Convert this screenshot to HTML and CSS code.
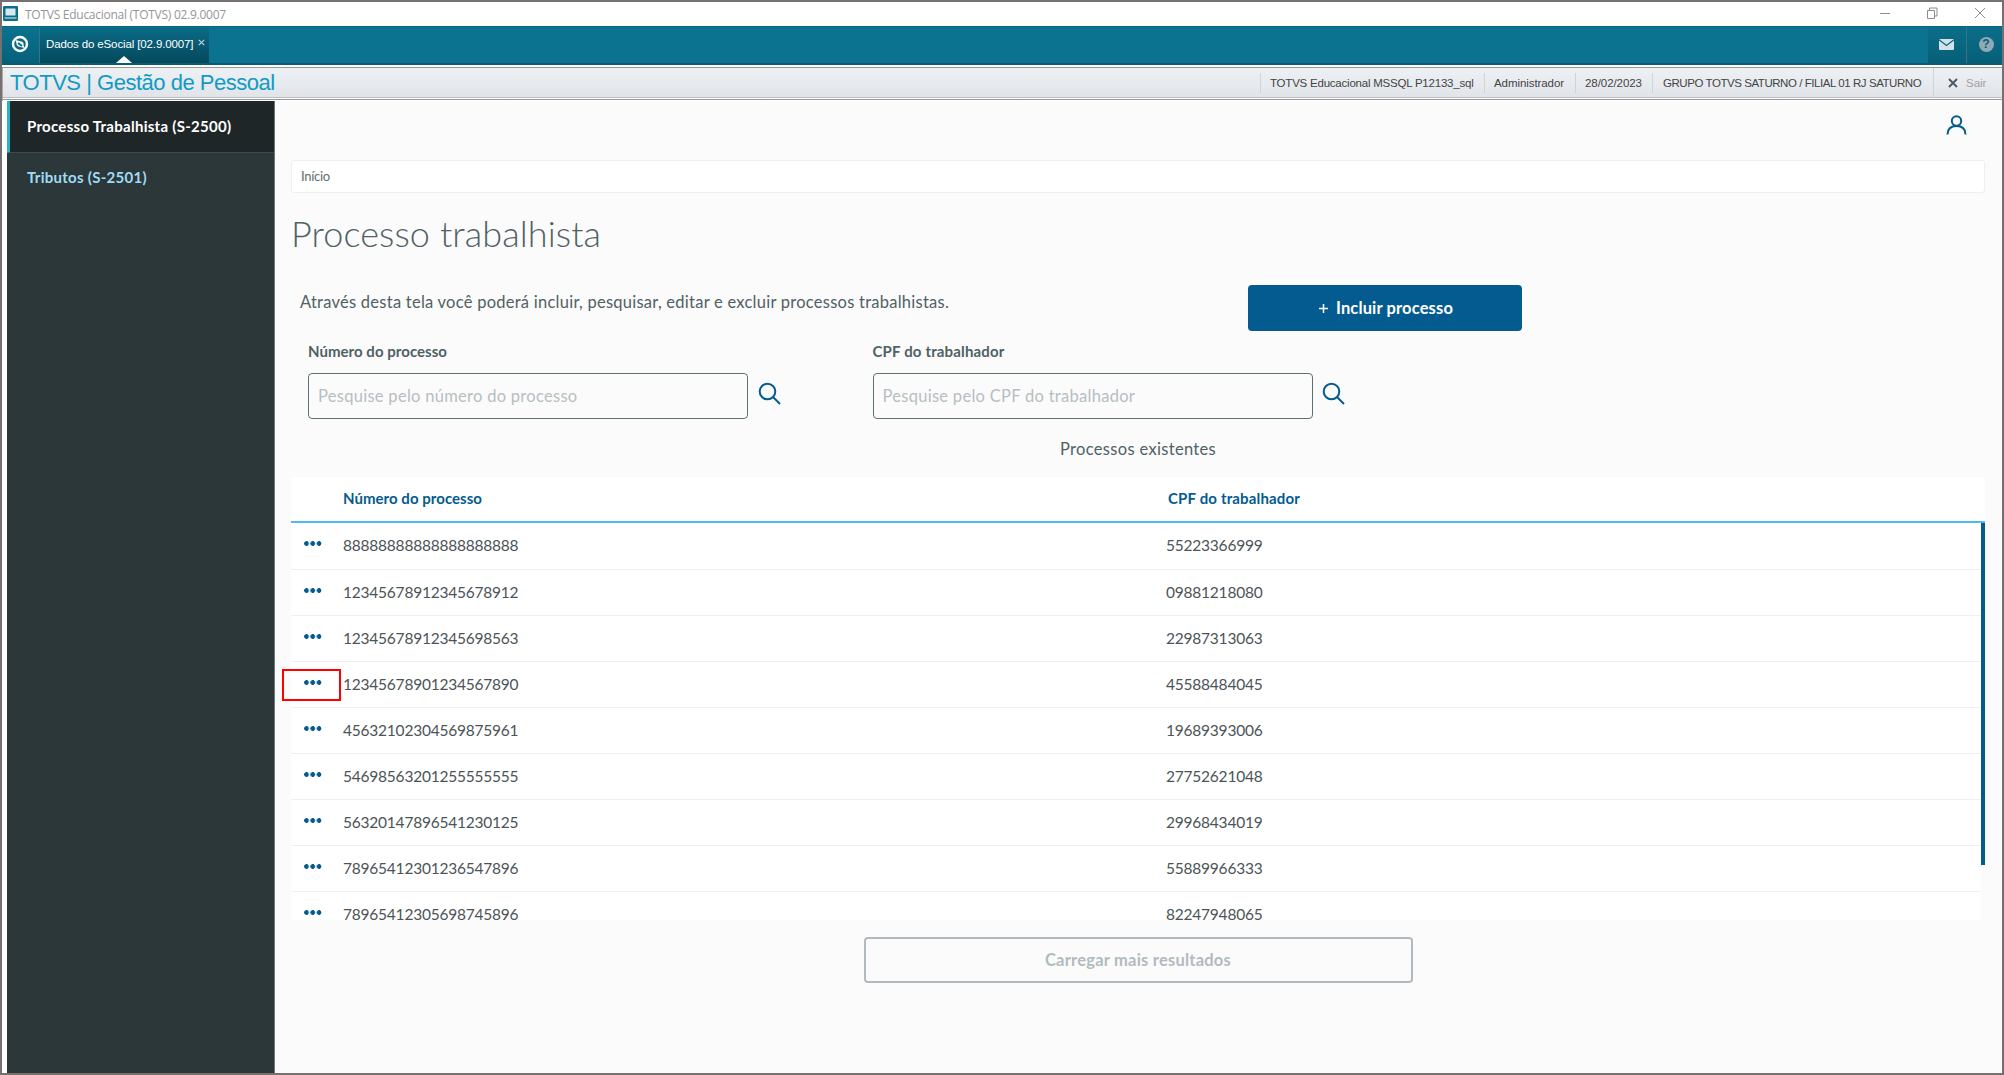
FILE: index.html
```html
<!DOCTYPE html>
<html lang="pt-BR">
<head>
<meta charset="utf-8">
<title>TOTVS Educacional (TOTVS) 02.9.0007</title>
<link rel="stylesheet" href="styles.css">
</head>
<body>
<div class="window">
  <header class="titlebar">
    <svg class="app-icon" width="15" height="15" viewBox="0 0 15 15"><rect width="15" height="15" rx="1" fill="#0b6f8b"/><rect x="2.5" y="2.5" width="10" height="7" fill="#d9e8ee"/><path d="M1.5 12h12" stroke="#9cc6d3" stroke-width="1.5"/></svg>
    <span class="app-name">TOTVS Educacional (TOTVS) 02.9.0007</span>
    <svg class="window-controls" width="108" height="14" viewBox="0 0 108 14" fill="none" stroke="#8d8d8d"><path d="M2 7.5h10M49.5 4.5h7v8h-7zM51.500 4.500v-2.500h7.500v8h-2M97 2l10 10M107 2l-10 10"/></svg>
  </header>
  <nav class="tabs">
    <div class="home"><svg width="18" height="18" viewBox="0 0 18 18" fill="none" stroke="#fff"><circle cx="9" cy="9" r="7" stroke-width="2.400"/><path d="M4.500 5l6 1.500q2.500.8 2 3.500l1 3-6-1.500q-2.500-.8-2-3z" fill="#fff" stroke="none"/><path d="M7 8l4 3" stroke="#0a6680" stroke-width="1.800"/></svg></div>
    <div class="tab"><span class="tab-name">Dados do eSocial [02.9.0007]</span><svg class="tab-close" width="7" height="7" viewBox="0 0 7 7"><path d="M.8.8l5.400 5.400M6.200.8L.8 6.200" stroke="#b9d3dc" stroke-width="1.200"/></svg><i class="pointer"></i></div>
    <div class="tools">
      <div class="tool mail"><svg width="15" height="11" viewBox="0 0 15 11"><rect width="15" height="11" rx="1" fill="#d3e1e8"/><path d="M0 .8l7.500 5.700L15 .8" fill="none" stroke="#0a6881" stroke-width="1.300"/></svg></div>
      <div class="tool help"><span>?</span></div>
    </div>
  </nav>
  <div class="modulebar">
    <h2 class="module">TOTVS | Gestão de Pessoal</h2>
    <div class="info env"><span>TOTVS Educacional MSSQL P12133_sql</span></div>
    <div class="info user"><span>Administrador</span></div>
    <div class="info date"><span>28/02/2023</span></div>
    <div class="info branch"><span>GRUPO TOTVS SATURNO / FILIAL 01 RJ SATURNO</span></div>
    <div class="info exit"><svg width="10" height="10" viewBox="0 0 10 10"><path d="M1 1l8 8M9 1L1 9" stroke="#4f5963" stroke-width="2"/></svg><span>Sair</span></div>
  </div>
  <div class="body">
    <aside class="sidebar">
      <a class="menu active"><span>Processo Trabalhista (S-2500)</span></a>
      <a class="menu"><span>Tributos (S-2501)</span></a>
    </aside>
    <main class="main">
      <div class="profile"><svg width="21" height="20" viewBox="0 0 21 20" fill="none" stroke="#045b8f" stroke-width="2"><circle cx="10.500" cy="6" r="4.700"/><path d="M1.500 19.500q0-8.500 9-8.500t9 8.500"/></svg></div>
      <div class="breadcrumb"><span>Início</span></div>
      <h1 class="title"><span>Processo trabalhista</span></h1>
      <div class="intro"><p>Através desta tela você poderá incluir, pesquisar, editar e excluir processos trabalhistas.</p>
        <button class="add"><svg width="9" height="9" viewBox="0 0 9 9"><path d="M4.500 0v9M0 4.500h9" stroke="#fff" stroke-width="1.500"/></svg><span>Incluir processo</span></button></div>
      <div class="filters">
        <div class="filter"><label>Número do processo</label>
          <div class="search"><div class="input"><span>Pesquise pelo número do processo</span></div><svg width="23" height="23" viewBox="0 0 23 23" fill="none" stroke="#045b8f" stroke-width="2"><circle cx="9.500" cy="9.500" r="7.800"/><path d="M15 15l7 7"/></svg></div></div>
        <div class="filter"><label class="wide">CPF do trabalhador</label>
          <div class="search"><div class="input"><span>Pesquise pelo CPF do trabalhador</span></div><svg width="23" height="23" viewBox="0 0 23 23" fill="none" stroke="#045b8f" stroke-width="2"><circle cx="9.500" cy="9.500" r="7.800"/><path d="M15 15l7 7"/></svg></div></div>
      </div>
      <p class="caption">Processos existentes</p>
      <section class="table">
        <div class="row head"><span></span><span>Número do processo</span><span class="wide">CPF do trabalhador</span></div>
        <div class="scroll">
          <div class="rows">
            <div class="row first"><i class="dots"></i><span>88888888888888888888</span><span>55223366999</span></div>
            <div class="row"><i class="dots"></i><span>12345678912345678912</span><span>09881218080</span></div>
            <div class="row"><i class="dots"></i><span>12345678912345698563</span><span>22987313063</span></div>
            <div class="row"><i class="dots marked"></i><span>12345678901234567890</span><span>45588484045</span></div>
            <div class="row"><i class="dots"></i><span>45632102304569875961</span><span>19689393006</span></div>
            <div class="row"><i class="dots"></i><span>54698563201255555555</span><span>27752621048</span></div>
            <div class="row"><i class="dots"></i><span>56320147896541230125</span><span>29968434019</span></div>
            <div class="row"><i class="dots"></i><span>78965412301236547896</span><span>55889966333</span></div>
            <div class="row last"><i class="dots"></i><span>78965412305698745896</span><span>82247948065</span></div>
          </div>
          <div class="thumb"></div>
        </div>
      </section>
      <button class="more">Carregar mais resultados</button>
    </main>
  </div>
</div>
</body>
</html>
```

FILE: styles.css
```css
*, *::after { box-sizing: border-box; }
body { margin: 0; font-family: Lato, sans-serif; color: #4f6165; overflow: hidden; }
h1, h2, p { margin: 0; font-weight: 400; }
span, p { white-space: nowrap; }
svg { display: block; flex: none; }
button { font: inherit; padding: 0; }
.window { width: 2004px; height: 1075px; border: 2px solid #767171; display: flex; flex-direction: column; background: #fff; }

.titlebar { height: 24px; display: flex; align-items: center; padding: 0 16px 0 1px; }
.app-icon { margin-top: -1px; }
.app-name { font: 12px/24px "Open Sans", sans-serif; letter-spacing: -0.266px; color: #969696; margin-left: 7px; padding-top: 1px; }
.window-controls { margin-left: auto; margin-top: -2px; }

.tabs { height: 39px; background: #0b728f; border-top: 1px solid #0a6680; border-bottom: 2px solid #075c76; display: flex; }
.home { width: 38px; background: linear-gradient(#0b728f, #07607a); border-right: 1px solid #35748a; display: grid; place-items: center; padding: 0 2px 2px 0; }
.tab { position: relative; width: 169px; display: flex; align-items: center; background: linear-gradient(#0a6c87, #05485b); padding: 0 0 2px 6px; font: 11.5px "Liberation Sans", sans-serif; letter-spacing: -0.125px; color: #fff; }
.tab-close { margin: -3px 0 0 5px; }
.pointer { position: absolute; left: 76px; bottom: 0; border: 8px solid transparent; border-top: 0; border-bottom: 7px solid #fff; }
.tools { margin-left: auto; display: flex; }
.tool { display: grid; place-items: center; background: linear-gradient(#0b6e89, #075f78); padding-bottom: 2px; }
.mail { width: 38px; padding-right: 2px; }
.help { width: 36px; border-left: 1px solid #3b7386; padding-left: 3px; }
.help span { width: 15px; height: 15px; border-radius: 50%; background: #8faab5; color: #075f78; font: bold 12px/15px "Liberation Sans", sans-serif; text-align: center; }

.modulebar { height: 36px; border-top: 2px solid #fff; background: linear-gradient(#eef1f4, #dfe3e8); display: flex; align-items: center; box-shadow: inset 0 1px #999, inset 1px 0 #aaa, inset 0 -1px #fff, inset 0 -2px #999, inset 0 -3px #fff, inset 0 -4px #b8bec3; font: 11.5px "Liberation Sans", sans-serif; color: #444; }
.module { font: 22px/30px "Liberation Sans", sans-serif; letter-spacing: -0.48px; color: #119bc4; padding-left: 8px; margin-top: -2px; flex: 1; }
.info { height: 20px; display: flex; align-items: center; border-left: 1px solid #cfd4d8; padding-left: 9px; margin-top: -2px; }
.env { width: 224px; letter-spacing: -0.22px; }
.user { width: 91px; letter-spacing: -0.07px; }
.date { width: 77px; letter-spacing: -0.06px; }
.branch { width: 281px; padding-left: 10px; letter-spacing: -0.44px; }
.exit { width: 69px; height: 30px; padding-left: 14px; gap: 8px; color: #9a9fa6; }

.body { flex: 1; display: flex; min-height: 0; padding-left: 5px; }
.sidebar { width: 268px; background: #2c3739; border-right: 1px solid #6d7576; font-weight: 700; font-size: 15px; letter-spacing: 0.28px; }
.menu { display: flex; align-items: center; height: 50px; padding: 0 0 2px 20px; color: #9fdcf5; }
.menu.active { height: 52px; padding-left: 17px; border-left: 3px solid #24b5cb; border-bottom: 1px solid #3d494b; background: #1f2628; color: #fff; }
.main { flex: 1; background: #fbfbfb; padding: 0 17px 0 16px; display: flex; flex-direction: column; }
.profile { height: 59px; display: flex; justify-content: flex-end; padding: 14px 18px 0 0; }
.breadcrumb { height: 33px; background: #fff; border: 1px solid #eeefef; border-radius: 3px; padding-left: 9px; line-height: 31px; font-size: 13px; letter-spacing: -0.29px; color: #5f6d70; }
.title { height: 92px; padding-top: 18px; font-size: 36px; line-height: 44px; font-weight: 300; letter-spacing: 0.09px; }
.intro { display: flex; height: 46px; font-size: 16.500px; padding-left: 9px; }
.intro p { width: 948px; line-height: 34px; letter-spacing: 0.252px; }
.add { width: 274px; height: 46px; background: #045b8f; color: #fff; border: 0; border-radius: 4px; display: flex; align-items: center; justify-content: center; gap: 8px; padding-left: 2px; font-weight: 700; letter-spacing: 0.14px; }
.filters { display: flex; padding: 9px 0 0 17px; height: 88px; }
.filter { width: 564.500px; }
.filter label { display: block; height: 33px; line-height: 22px; font-size: 15px; font-weight: 700; letter-spacing: 0.04px; }
.filter label.wide { letter-spacing: 0.165px; }
.search { display: flex; gap: 9.500px; }
.search svg { margin-top: 9px; }
.input { width: 440px; height: 46px; border: 1px solid #5d7075; border-radius: 4px; padding-left: 9px; line-height: 44px; font-size: 16.500px; letter-spacing: 0.285px; color: #b5bfc2; }
.caption { height: 58px; padding-top: 18px; line-height: 24px; font-size: 16.500px; letter-spacing: 0.329px; text-align: center; }
.table { height: 443px; display: flex; flex-direction: column; }
.row { display: grid; grid-template-columns: 52px 823px 1fr; height: 46px; border-bottom: 1px solid #eeefef; line-height: 45px; font-size: 15.500px; letter-spacing: -0.222px; color: #4b5457; background: #fff; }
.head { height: 46px; border-bottom: 2px solid #4fb8f5; line-height: 43px; color: #045b8f; font-weight: 700; font-size: 15px; letter-spacing: 0.04px; }
.head .wide { padding-left: 2px; letter-spacing: 0.165px; }
.scroll { flex: 1; min-height: 0; display: flex; }
.rows { flex: 1; }
.row.first { height: 47px; }
.row.last { height: 28px; border-bottom: 0; }
.thumb { width: 4px; height: 342px; background: #045b8f; }
.dots { position: relative; width: 18px; height: 5px; margin: 18px 0 0 13px; background: radial-gradient(circle at 2.500px 2.500px, #045b8f 2.100px, transparent 2.600px) 0 0/6.300px 5px; }
.marked::after { content: ""; position: absolute; left: -22px; top: -11px; width: 59px; height: 32px; border: 2px solid #f00; }
.more { width: 549px; height: 46px; margin: 17px auto 0; border: 2px solid #b1bbbf; border-radius: 4px; background: none; color: #b1bbbf; font-size: 16.500px; font-weight: 700; letter-spacing: 0.225px; }
```
